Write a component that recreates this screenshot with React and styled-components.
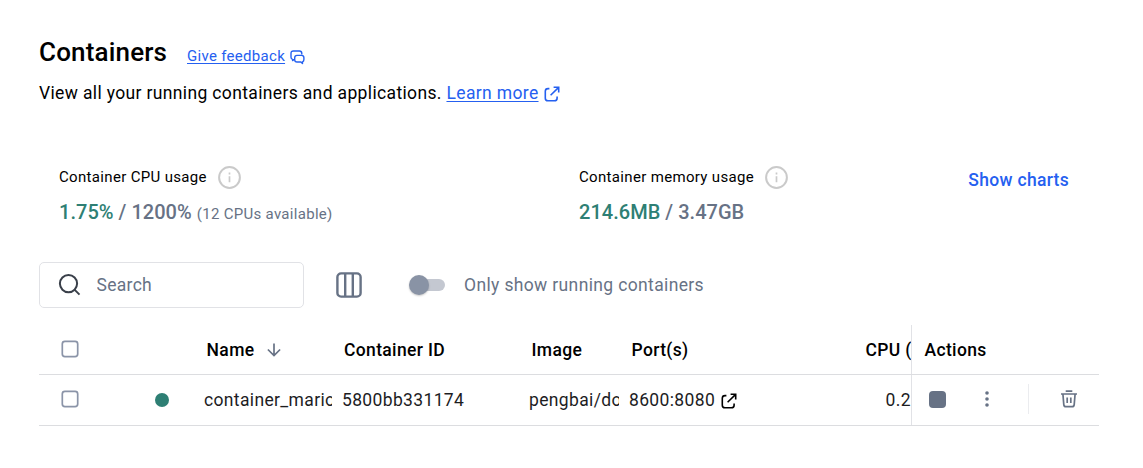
import React from "react";
import styled, { createGlobalStyle } from "styled-components";

const c = { line: "#e1e2e6", slate: "#677285", text: "#000", link: "#2560f0", green: "#2e7f74" };

const Global = createGlobalStyle`
  * { box-sizing: border-box; }
  body { margin: 0; background: #fff; color: ${c.text}; font-family: Roboto, "Liberation Sans", sans-serif; }
  svg { display: block; flex: none; }
`;

const Page = styled.main`
  width: 1143px; height: 468px; padding: 36px 44px 0 39px; overflow: hidden;
  display: flex; flex-direction: column;
`;
const TitleRow = styled.header` display: flex; height: 32px; align-items: center; `;
const Title = styled.h1` margin: 0; font-size: 26px; line-height: 32px; font-weight: 500; letter-spacing: 0.17px; width: 148px; `;
const Link = styled.a`
  color: ${c.link}; text-decoration: underline; text-underline-offset: 2px;
  font-size: ${p => p.$size}px; letter-spacing: ${p => p.$track}px; cursor: pointer;
`;
const Feedback = styled.div` display: flex; align-items: center; gap: 4.5px; padding-top: 8px; svg { margin-top: 2px; } `;
const Intro = styled.p`
  margin: 12px 0 0; height: 26px; display: flex; align-items: center; white-space: pre;
  font-size: 17.5px; letter-spacing: 0.352px;
  svg { margin: 2px 0 0 5px; }
`;
const Stats = styled.section`
  display: grid; grid-template-columns: 520px 1fr auto; margin-top: 60px; padding: 0 30px 0 20px; height: 60px;
`;
const StatLabel = styled.div` display: flex; align-items: center; gap: 11px; height: 23px; font-size: 15px; letter-spacing: 0.33px; `;
const LabelText = styled.span` padding-bottom: 2px; `;
const StatValue = styled.div`
  margin-top: 11px; line-height: 24px; font-size: 20px; font-weight: 500; color: ${c.slate}; letter-spacing: 0.03px; white-space: pre;
`;
const Used = styled.span` color: ${c.green}; `;
const Note = styled.span` font-size: 15px; font-weight: 400; letter-spacing: 0.3px; `;
const ChartsButton = styled.button`
  align-self: start; margin-top: 2px; border: 0; background: none; padding: 0; height: 24px; color: ${c.link};
  font: 500 17.5px/24px Roboto, sans-serif; letter-spacing: 0.3px;
`;
const Toolbar = styled.div` display: flex; align-items: center; height: 46px; margin-top: 36px; `;
const SearchBox = styled.label`
  display: flex; align-items: center; gap: 15.5px; width: 265px; height: 46px; padding: 0 18px;
  border: 1px solid ${c.line}; border-radius: 5px; color: ${c.slate};
  svg { margin-top: -1px; }
`;
const SearchInput = styled.input`
  border: 0; outline: 0; padding: 0; width: 170px; font: 400 17.5px Roboto, sans-serif; letter-spacing: 0.3px; color: ${c.slate};
  &::placeholder { color: ${c.slate}; opacity: 1; }
`;
const ColumnsButton = styled.button` border: 0; padding: 0; background: none; margin-left: 32px; `;
const Switch = styled.span`
  display: flex; align-items: center; width: 35px; height: 12px; margin: 0 19px 0 48px; border-radius: 6px; background: #c4c8d1;
`;
const Thumb = styled.span`
  width: 20px; height: 20px; margin-left: -1px; border-radius: 50%; background: #8993a5; flex: none;
  box-shadow: 0 1px 2px rgba(0,0,0,.22);
`;
const SwitchLabel = styled.span` font-size: 17.5px; letter-spacing: 0.36px; color: ${c.slate}; `;
const Table = styled.div` margin-top: 17px; font-size: 17.5px; letter-spacing: 0.35px; `;
const Row = styled.div`
  display: grid; grid-template-columns: 93px 72px 138px 187px 100px 150px 132px 188px;
  height: ${p => (p.$head ? 50 : 51)}px; border-bottom: 1px solid #dcdde0;
  font-weight: ${p => (p.$head ? 500 : 400)}; color: ${p => (p.$head ? "#000" : "#1d1d1f")};
`;
const Cell = styled.div`
  display: flex; align-items: center; min-width: 0; overflow: hidden; white-space: nowrap;
  margin-right: ${p => p.$gap || 0}px; padding-left: ${p => p.$pad || 0}px; padding-bottom: ${p => p.$lift || 0}px;
`;
const Status = styled.span` width: 14px; height: 14px; margin-left: 23.4px; border-radius: 50%; background: ${c.green}; `;
const Actions = styled(Cell)` border-left: 1px solid ${c.line}; `;
const Stop = styled.span` flex: none; width: 17px; height: 17px; border-radius: 4px; background: ${c.slate}; `;
const Divider = styled.span` flex: none; width: 1px; height: 30px; background: #ebecef; `;
const Slot = styled.span` display: flex; flex: none; justify-content: center; width: ${p => p.$w}px; padding-top: ${p => p.$drop || 0}px; `;

const Check = () => (
  <svg width="18" height="18" viewBox="0 0 18 18" fill="#fff" stroke="#8b94a8" strokeWidth="1.7">
    <rect x="1.3" y="1.3" width="15.4" height="15.4" rx="2.6" />
  </svg>
);
const InfoIcon = () => (
  <svg width="23" height="23" viewBox="0 0 23 23" fill="none" stroke="#cacaca" strokeWidth="2">
    <circle cx="11.5" cy="11.5" r="10.4" /><path d="M11.5 10.2v6M11.5 6.6v2" strokeWidth="1.7" />
  </svg>
);
const ExternalIcon = ({ color }) => (
  <svg width="16" height="16" viewBox="0 0 16 16" fill="none" stroke={color} strokeWidth="1.6">
    <path d="M5.4 2.6H4Q1.3 2.6 1.3 5.2V12.2Q1.3 14.8 4 14.8H10.4Q13.1 14.8 13.1 12.2V10.6M6.6 9.2L14.4 1.6M9.6 1.3H14.7V6.4" />
  </svg>
);
const ChatIcon = () => (
  <svg width="15" height="15" viewBox="0 0 15 15" fill="none" stroke={c.link} strokeWidth="1.4" strokeLinejoin="round">
    <path d="M4.4 9.6H3.8L2.6 10.6V9.3Q1 8.8 1 7.2V3.4Q1 1 3.4 1H9.4Q11.8 1 11.8 3.4V4.6" />
    <path d="M7 5.4H11.6Q13.9 5.4 13.9 7.7V9.6Q13.9 11.4 12.5 11.9V13.6L10.9 12H7Q4.7 12 4.7 9.7V7.7Q4.7 5.4 7 5.4Z" />
  </svg>
);
const SearchIcon = () => (
  <svg width="23" height="23" viewBox="0 0 23 23" fill="none" stroke="#393f49" strokeWidth="2">
    <circle cx="10.5" cy="10.6" r="8.6" /><path d="M16.5 16.6L21.5 21.6" />
  </svg>
);
const ColumnsIcon = () => (
  <svg width="26" height="26" viewBox="0 0 26 26" fill="none" stroke={c.slate} strokeWidth="2.4">
    <rect x="1.4" y="1.4" width="23.2" height="23.2" rx="3.7" /><path d="M9.2 1.4V24.6M16.8 1.4V24.6" />
  </svg>
);
const ArrowIcon = () => (
  <svg width="14" height="14" viewBox="0 0 14 14" fill="none" stroke={c.slate} strokeWidth="1.7">
    <path d="M7 .5V12.6M.9 6.5L7 12.6L13.1 6.5" />
  </svg>
);
const MoreIcon = () => (
  <svg width="4" height="16" viewBox="0 0 4 16" fill={c.slate}>
    <circle cx="2" cy="2" r="1.8" /><circle cx="2" cy="8" r="1.8" /><circle cx="2" cy="14" r="1.8" />
  </svg>
);
const TrashIcon = () => (
  <svg width="18" height="18" viewBox="0 0 18 18" fill="none" stroke={c.slate} strokeWidth="1.7">
    <path d="M5.7 1.2H12.3M1 4H17M2.9 4L3.8 14.6Q4 16.7 6 16.7H12Q14 16.7 14.2 14.6L15.1 4M7.2 7.4V13M10.8 7.4V13" />
  </svg>
);

export default function App() {
  return (
    <Page>
      <Global />
      <TitleRow>
        <Title>Containers</Title>
        <Feedback><Link $size={15} $track={0.3}>Give feedback</Link><ChatIcon /></Feedback>
      </TitleRow>
      <Intro>
        {"View all your running containers and applications. "}
        <Link $size={17.5} $track={0.352}>Learn more</Link><ExternalIcon color={c.link} />
      </Intro>
      <Stats>
        <div>
          <StatLabel><LabelText>Container CPU usage</LabelText><InfoIcon /></StatLabel>
          <StatValue><Used>1.75%</Used> / 1200% <Note>(12 CPUs available)</Note></StatValue>
        </div>
        <div>
          <StatLabel><LabelText>Container memory usage</LabelText><InfoIcon /></StatLabel>
          <StatValue><Used>214.6MB</Used> / 3.47GB</StatValue>
        </div>
        <ChartsButton>Show charts</ChartsButton>
      </Stats>
      <Toolbar>
        <SearchBox><SearchIcon /><SearchInput placeholder="Search" /></SearchBox>
        <ColumnsButton aria-label="Columns"><ColumnsIcon /></ColumnsButton>
        <Switch><Thumb /></Switch>
        <SwitchLabel>Only show running containers</SwitchLabel>
      </Toolbar>
      <Table>
        <Row $head>
          <Cell $pad={22} $lift={1}><Check /></Cell>
          <Cell />
          <Cell $pad={2.6}>Name<Slot $w={39}><ArrowIcon /></Slot></Cell>
          <Cell $pad={2}>Container ID</Cell>
          <Cell $pad={2.5}>Image</Cell>
          <Cell $pad={2.5}>Port(s)</Cell>
          <Cell $pad={86.5}>CPU (</Cell>
          <Actions $pad={12.5}>Actions</Actions>
        </Row>
        <Row>
          <Cell $pad={22} $lift={2}><Check /></Cell>
          <Cell $lift={1}><Status /></Cell>
          <Cell $gap={10}>container_mario</Cell>
          <Cell>5800bb331174</Cell>
          <Cell $gap={10}>pengbai/do</Cell>
          <Cell>8600:8080<Slot $w={27} $drop={2}><ExternalIcon color="#000" /></Slot></Cell>
          <Cell $pad={106.5}>0.2</Cell>
          <Actions $pad={17.4} $lift={2}>
            <Stop /><Slot $w={82}><MoreIcon /></Slot>
            <Divider /><Slot $w={80}><TrashIcon /></Slot>
          </Actions>
        </Row>
      </Table>
    </Page>
  );
}
